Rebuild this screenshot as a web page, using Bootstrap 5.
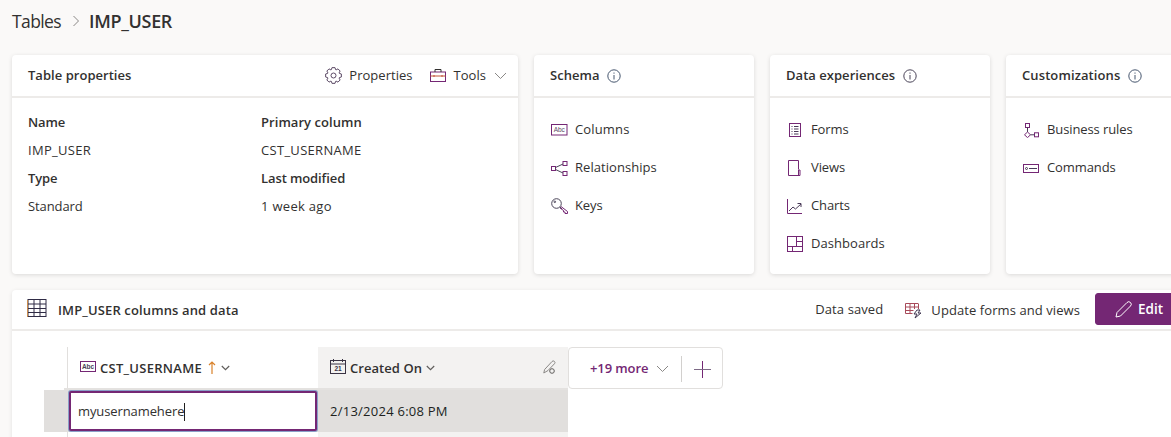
<!DOCTYPE html>
<html lang="en">
<head>
<meta charset="utf-8">
<title>IMP_USER</title>
<link href="https://cdn.jsdelivr.net/npm/bootstrap@5.3.0/dist/css/bootstrap.min.css" rel="stylesheet">
<style>
html,body{height:437px;overflow:hidden}
body{background:#faf9f8;color:#323130;font-family:"Open Sans","Noto Sans","Liberation Sans",sans-serif;font-size:13px;letter-spacing:-.1px}
svg{display:block;flex:none}
.pg{width:1240px;padding:0 0 0 12px}
.crumb{height:55px;padding-bottom:13px;font-size:18px;letter-spacing:-.35px}
.crumb .c0{font-size:17.5px;letter-spacing:-.6px}
.crumb b{font-weight:600;margin-left:9px;letter-spacing:-.33px}
.crumb svg{margin-left:11px}
.panels{gap:16px;height:219px}
.pane{background:#fff;border-radius:4px;box-shadow:0 1px 4px rgba(0,0,0,.13);flex:none}
.pane-a{width:506px}
.pane-b{width:220px}
.pane-h{height:43px;border-bottom:2px solid #edebe9;padding:0 11px 0 16px;font-weight:600;letter-spacing:.03px}
.tool{gap:8px}
.tool-p{margin-right:17px;gap:7px}
.wd{letter-spacing:.15px}
.wd1{letter-spacing:.05px}
.wd3{letter-spacing:.1px}
.wd2{letter-spacing:.3px}
.props{padding:10px 16px 0;width:233px}
.props div{height:28px;line-height:28px;white-space:nowrap}
.props .lbl{font-weight:600}
.links{padding:13px 16px 0}
.links a{height:38px;color:#323130;text-decoration:none;gap:8px}
.ico{width:17px;display:flex;justify-content:center}
.shift a{gap:7px}
.shift .ico{width:18px;justify-content:flex-end}
.dv{margin-top:16px;width:1173px;height:200px;background:#fff;border-radius:4px 0 0 0;box-shadow:0 1px 4px rgba(0,0,0,.1)}
.dv-h{height:41px;border-bottom:2px solid #edebe9;padding-left:15px}
.tbl-i{margin-top:-3px}
.dv-t{font-weight:600;margin-left:11px;letter-spacing:.13px;padding-top:2px}
.saved{margin-right:22px;letter-spacing:.1px}
.upd{gap:9px;margin-right:15px;letter-spacing:.08px;padding-top:2px}
.edit-b{--bs-btn-bg:#742774;--bs-btn-color:#fff;--bs-btn-border-color:#742774;--bs-btn-hover-bg:#742774;--bs-btn-hover-color:#fff;--bs-btn-hover-border-color:#742774;--bs-btn-border-radius:3px;--bs-btn-font-size:13.5px;--bs-btn-font-weight:600;--bs-btn-padding-x:0;--bs-btn-padding-y:0;width:90px;height:32px;gap:6px;justify-content:flex-start;padding-left:19px;margin-top:-1px}
.gridw{padding:16px 0 0 32px}
.gr{height:43px}
.gutter{width:23px;flex:none}
.gutter i{display:block;width:3px;height:43px;border-bottom:2px solid #e4e2e0}
.hc{height:41px;flex:none;font-weight:600;gap:4px}
.hcw{height:43px;border-bottom:2px solid #e4e2e0;flex:none}
.hc1{width:251px;border-left:1px solid #e1dfdd;background:#fff;padding-left:12px}
.hc2{width:250px;background:#f3f2f1;padding-left:12px}
.hd-t{letter-spacing:.28px;padding-top:2px}
.hd-c{letter-spacing:.05px;padding-top:2px}
.hd-i{margin-top:-3px}
.arrow{margin:0 1px 0 2px}
.pencil{margin-right:12px;margin-top:-1px}
.more{width:155px;height:42px;border:1px solid #e1dfdd;border-radius:4px;flex:none;color:#742774;font-weight:600;padding:2px 0 0 21px}
.more .sep{width:1px;height:26px;background:#d2d0ce;margin:0 12px 0 12px}
.rowsel{height:42px;background:#e1dfdd;width:524px}
.rowsel .g{width:25px;flex:none}
.cell-in{width:248px;height:40px;margin:1px 1px 1px 0;flex:none;background:#fff;border:2px solid #742774;box-shadow:0 0 0 1px #8aa0c8;border-radius:2px;padding:2px 0 0 7px}
.caret{width:1px;height:18px;background:#201f1e}
.cell-d{padding:2px 0 0 12px;color:#201f1e;letter-spacing:.25px}
.rest{height:5px;width:524px}
.rest i{display:block;height:5px}
.rest .r0{width:23px}
.rest .r1{width:251px;border-left:1px solid #e1dfdd;background:#fff}
.rest .r2{width:250px;background:#f3f2f1}
</style>
</head>
<body>
<div class="pg">
  <div class="crumb d-flex align-items-center">
    <span class="c0">Tables</span>
    <svg width="8" height="12" viewBox="0 0 8 12" fill="none" stroke="#8a8886"><path d="M1.500 1l5 5-5 5"/></svg>
    <b>IMP_USER</b>
  </div>
  <div class="panels d-flex">
    <section class="pane pane-a">
      <div class="pane-h d-flex align-items-center">
        <span class="me-auto">Table properties</span>
        <span class="tool tool-p d-flex align-items-center fw-normal">
          <svg width="17" height="17" viewBox="0 0 17 17" fill="none" stroke="#5c4a66"><circle cx="8.500" cy="8.500" r="2.500"/><path d="M10.030.65L10.620 2.670L11.120 2.880L12.970 1.870L15.130 4.030L14.120 5.880L14.330 6.380L16.350 6.970V10.030L14.330 10.620L14.120 11.120L15.130 12.970L12.970 15.130L11.120 14.120L10.620 14.330L10.030 16.350H6.970L6.380 14.330L5.880 14.120L4.030 15.130L1.870 12.970L2.880 11.120L2.670 10.620L.65 10.030V6.970L2.670 6.380L2.880 5.880L1.870 4.030L4.030 1.870L5.880 2.880L6.380 2.670L6.970.65Z"/></svg>
          <span>Properties</span>
        </span>
        <span class="tool d-flex align-items-center fw-normal">
          <svg width="16" height="13" viewBox="0 0 16 13" fill="none" stroke="#742774"><rect x=".5" y="3" width="15" height="9.500"/><path d="M5 3V.5h6V3" stroke="#323130"/><path d="M.5 7h15M4 6v2M12 6v2" stroke="#c2553a"/></svg>
          <span>Tools</span>
          <svg width="13" height="8" viewBox="0 0 13 8" fill="none" stroke="#8a8886"><path d="M1 1l5.500 5.500L12 1"/></svg>
        </span>
      </div>
      <div class="d-flex">
        <div class="props">
          <div class="lbl">Name</div><div class="wd2">IMP_USER</div><div class="lbl">Type</div><div>Standard</div>
        </div>
        <div class="props">
          <div class="lbl wd1">Primary column</div><div class="wd2">CST_USERNAME</div><div class="lbl">Last modified</div><div class="wd2">1 week ago</div>
        </div>
      </div>
    </section>
    <section class="pane pane-b">
      <div class="pane-h d-flex align-items-center gap-2"><span>Schema</span>
        <svg width="14" height="14" viewBox="0 0 14 14" fill="none" stroke="#46566e"><circle cx="7" cy="7" r="6.200"/><path d="M7 6v4.500M7 3.500v1.200"/></svg></div>
      <div class="links shift d-flex flex-column">
        <a href="#" class="d-flex align-items-center"><span class="ico">
          <svg width="17" height="12" viewBox="0 0 17 12"><rect x=".5" y=".5" width="15.500" height="10.500" fill="none" stroke="#742774"/><text x="8.200" y="8.200" font-size="6.500" text-anchor="middle" fill="#5c4a66" font-family="Liberation Sans">Abc</text></svg></span><span class="wd">Columns</span></a>
        <a href="#" class="d-flex align-items-center"><span class="ico">
          <svg width="17" height="15" viewBox="0 0 17 15" fill="none" stroke="#742774"><rect x=".5" y="5.500" width="4" height="4"/><rect x="12" y=".5" width="4" height="4"/><rect x="12" y="10.500" width="4" height="4"/><path d="M4.500 6.500L12 3M4.500 8.500L12 12" stroke="#4a4458"/></svg></span><span class="wd1">Relationships</span></a>
        <a href="#" class="d-flex align-items-center"><span class="ico">
          <svg width="17" height="16" viewBox="0 0 17 16" fill="none" stroke="#4a4458"><circle cx="5.500" cy="5.500" r="4.800"/><circle cx="3.800" cy="3.800" r=".8"/><path d="M9 9l2 2"/><path d="M10 8.500l6.500 5v2h-2.500v-1.500h-1.500v-1.500L9 10" stroke="#742774"/></svg></span>Keys</a>
      </div>
    </section>
    <section class="pane pane-b">
      <div class="pane-h d-flex align-items-center gap-2"><span>Data experiences</span>
        <svg width="14" height="14" viewBox="0 0 14 14" fill="none" stroke="#4a4458"><circle cx="7" cy="7" r="6.200"/><path d="M7 6v4.500M7 3.500v1.200"/></svg></div>
      <div class="links d-flex flex-column">
        <a href="#" class="d-flex align-items-center"><span class="ico">
          <svg width="12" height="14" viewBox="0 0 12 14" fill="none" stroke="#742774"><rect x=".5" y=".5" width="11" height="13"/><path d="M2.500 3.500h1M2.500 6h1M2.500 8.500h1M2.500 11h1M5 3.500h4.500M5 6h4.500M5 8.500h4.500M5 11h4.500" stroke="#4a3a58"/></svg></span>Forms</a>
        <a href="#" class="d-flex align-items-center"><span class="ico">
          <svg width="13" height="16" viewBox="0 0 13 16" fill="none" stroke="#742774"><path d="M10.500 9.500V.5H.5v15h11.500v-5.500h-1.500v5.500"/></svg></span>Views</a>
        <a href="#" class="d-flex align-items-center"><span class="ico">
          <svg width="15" height="15" viewBox="0 0 15 15" fill="none" stroke="#742774"><path d="M.5 0v14.500H15"/><path d="M2 12l4-4 2.500 2L14 5M10.500 4.500H14V8" stroke="#4a3a58"/></svg></span>Charts</a>
        <a href="#" class="d-flex align-items-center"><span class="ico">
          <svg width="16" height="16" viewBox="0 0 16 16" fill="none" stroke="#742774"><rect x=".5" y=".5" width="15" height="15"/><path d="M9.500.5v10M.5 10.500h15M9.500 5.500h6M5.500 10.500v5"/></svg></span><span class="wd1">Dashboards</span></a>
      </div>
    </section>
    <section class="pane pane-b">
      <div class="pane-h d-flex align-items-center gap-2"><span class="wd3">Customizations</span>
        <svg width="14" height="14" viewBox="0 0 14 14" fill="none" stroke="#46566e"><circle cx="7" cy="7" r="6.200"/><path d="M7 6v4.500M7 3.500v1.200"/></svg></div>
      <div class="links d-flex flex-column">
        <a href="#" class="d-flex align-items-center"><span class="ico">
          <svg width="16" height="15" viewBox="0 0 16 15" fill="none" stroke="#742774"><rect x="2.500" y=".5" width="4" height="4"/><path d="M4.500 9l3 2.800-3 2.800-3-2.800z"/><rect x="11.500" y="9.800" width="4" height="4"/><path d="M4.500 4.500V9M7.500 11.800h4" stroke="#4a3a58"/></svg></span>Business rules</a>
        <a href="#" class="d-flex align-items-center"><span class="ico">
          <svg width="16" height="9" viewBox="0 0 16 9" fill="none" stroke="#742774"><rect x=".5" y=".5" width="15" height="8"/><circle cx="3.500" cy="4.500" r="1" stroke="#4a3a58"/><path d="M6 4.500h8" stroke="#4a3a58"/></svg></span>Commands</a>
      </div>
    </section>
  </div>
  <section class="dv">
    <div class="dv-h d-flex align-items-center">
      <svg class="tbl-i" width="20" height="18" viewBox="0 0 20 18" fill="none" stroke="#2f2b45"><rect x="1" y=".5" width="18" height="17"/><path d="M1 5h18M1 9.500h18M1 13.500h18M7 1v17M13 1v17"/><path d="M.5 1v17" stroke="#c98a4b"/></svg>
      <span class="dv-t me-auto">IMP_USER columns and data</span>
      <span class="saved">Data saved</span>
      <span class="upd d-flex align-items-center">
        <svg width="17" height="17" viewBox="0 0 17 17" fill="none" stroke="#6a3a6a"><path d="M.5 1.500h13M.5 1.500v10h7M.5 5h13M.5 8.500h8M5 2v9M9.500 2v5M13.500 2v5" stroke="#a84a5a"/><path d="M12 8l-3 4h3l-2 4 6-5h-3l2-3z" stroke="#3f3550"/></svg>
        <span>Update forms and views</span>
      </span>
      <button class="btn edit-b d-flex align-items-center" type="button">
        <svg width="17" height="17" viewBox="0 0 17 17" fill="none" stroke="#fff"><path d="M1 16l1-4.500L12 1.500a2.100 2.100 0 0 1 3.500 3.500l-10 10z"/></svg>Edit</button>
    </div>
    <div class="gridw">
      <div class="d-flex gr">
        <div class="gutter d-flex justify-content-end"><i></i></div>
        <div class="hcw">
        <div class="hc hc1 d-flex align-items-center">
          <svg class="hd-i" width="16" height="11" viewBox="0 0 16 11"><rect x=".5" y=".5" width="15" height="10" fill="none" stroke="#742774"/><text x="8" y="8" font-size="6.500" text-anchor="middle" fill="#4a4458" font-family="Liberation Sans">Abc</text></svg>
          <span class="hd-t">CST_USERNAME</span>
          <svg class="arrow" width="8" height="13" viewBox="0 0 8 13" fill="none" stroke="#d9822b" stroke-width="1.200"><path d="M4 13V1M1 4l3-3 3 3"/></svg>
          <svg width="9" height="6" viewBox="0 0 9 6" fill="none" stroke="#605e5c" stroke-width="1.200"><path d="M.8 1l3.700 3.700L8.200 1"/></svg>
        </div>
        </div>
        <div class="hcw">
        <div class="hc hc2 d-flex align-items-center">
          <svg class="hd-i" width="16" height="15" viewBox="0 0 16 15" fill="none" stroke="#3a3344"><rect x=".5" y="1.500" width="15" height="13"/><path d="M.5 5h15M3.500 0v3M12.500 0v3"/><text x="8" y="12.300" font-size="6.500" text-anchor="middle" fill="#3a3344" stroke="none" font-family="Liberation Sans">21</text></svg>
          <span class="hd-c">Created On</span>
          <svg width="9" height="6" viewBox="0 0 9 6" fill="none" stroke="#605e5c" stroke-width="1.200"><path d="M.8 1l3.700 3.700L8.200 1"/></svg>
          <svg class="ms-auto pencil" width="13" height="14" viewBox="0 0 13 14" fill="none" stroke="#8a8886"><path d="M.8 13l.8-3.500L9 1.500a1.600 1.600 0 0 1 2.500 2.200L5 10.500z"/><circle cx="9" cy="11" r="2.300" stroke="#605e5c"/></svg>
        </div>
        </div>
        <div class="more d-flex align-items-center">
          <span>+19 more</span>
          <svg class="ms-2" width="13" height="8" viewBox="0 0 13 8" fill="none" stroke="#8a8886"><path d="M1 1l5.500 5.500L12 1"/></svg>
          <span class="sep"></span>
          <svg width="17" height="17" viewBox="0 0 17 17" fill="none" stroke="#742774"><path d="M8.500 0v17"/><path d="M0 8.500h17" stroke="#7d6a86"/></svg>
        </div>
      </div>
      <div class="rowsel d-flex">
        <div class="g"></div>
        <div class="cell-in d-flex align-items-center"><span>myusernamehere</span><span class="caret"></span></div>
        <div class="cell-d d-flex align-items-center">2/13/2024 6:08 PM</div>
      </div>
      <div class="rest d-flex"><i class="r0"></i><i class="r1"></i><i class="r2"></i></div>
    </div>
  </section>
</div>
</body>
</html>
